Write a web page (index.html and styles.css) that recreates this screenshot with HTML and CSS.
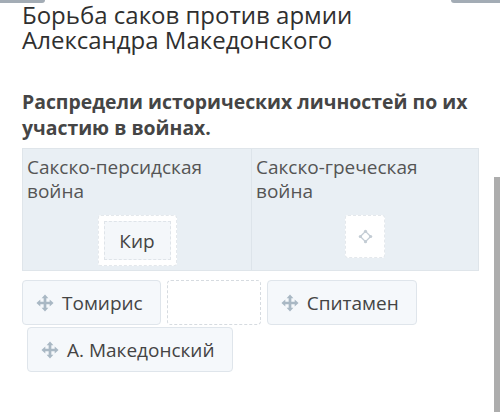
FILE: index.html
```html
<!DOCTYPE html>
<html lang="ru">
  <head>
    <meta charset="UTF-8" />
    <meta name="viewport" content="width=device-width, initial-scale=1.0" />
    <title>Борьба саков</title>
    <link rel="stylesheet" href="styles.css">
  </head>
  <body>
    <div class="edges">
      <span class="edge edge-left"></span>
      <span class="edge edge-right"></span>
    </div>
    <main>
      <h1>Борьба саков против армии Александра Македонского</h1>
      <p class="task">Распредели исторических личностей по их участию в войнах.</p>
      <div class="board">
        <div class="column">
          <div class="caption">Сакско-персидская война</div>
          <div class="slot">
            <div class="placed">Кир</div>
          </div>
        </div>
        <div class="column">
          <div class="caption">Сакско-греческая война</div>
          <div class="slot slot-empty">
            <svg class="slot-icon" viewBox="0 0 16 16" width="15" height="15">
              <path d="M8 2.5 L13.5 8 L8 13.5 L2.5 8 Z" fill="none" stroke="#c3ccd4" stroke-width="1.4" />
              <circle cx="8" cy="2.5" r="1.7" fill="#c3ccd4" />
              <circle cx="13.5" cy="8" r="1.7" fill="#c3ccd4" />
              <circle cx="8" cy="13.5" r="1.7" fill="#c3ccd4" />
              <circle cx="2.5" cy="8" r="1.7" fill="#c3ccd4" />
            </svg>
          </div>
        </div>
      </div>
      <div class="pool">
        <div class="chip">
          <svg class="move" viewBox="0 0 20 20" width="18" height="18">
            <path d="M10 0.5 L13.8 4.8 H11.5 V8.5 H15.2 V6.2 L19.5 10 L15.2 13.8 V11.5 H11.5 V15.2 H13.8 L10 19.5 L6.2 15.2 H8.5 V11.5 H4.8 V13.8 L0.5 10 L4.8 6.2 V8.5 H8.5 V4.8 H6.2 Z" fill="#a9b8c4" />
          </svg>
          Томирис
        </div>
        <div class="gap-slot"></div>
        <div class="chip">
          <svg class="move" viewBox="0 0 20 20" width="18" height="18">
            <path d="M10 0.5 L13.8 4.8 H11.5 V8.5 H15.2 V6.2 L19.5 10 L15.2 13.8 V11.5 H11.5 V15.2 H13.8 L10 19.5 L6.2 15.2 H8.5 V11.5 H4.8 V13.8 L0.5 10 L4.8 6.2 V8.5 H8.5 V4.8 H6.2 Z" fill="#a9b8c4" />
          </svg>
          Спитамен
        </div>
        <div class="chip chip-shifted">
          <svg class="move" viewBox="0 0 20 20" width="18" height="18">
            <path d="M10 0.5 L13.8 4.8 H11.5 V8.5 H15.2 V6.2 L19.5 10 L15.2 13.8 V11.5 H11.5 V15.2 H13.8 L10 19.5 L6.2 15.2 H8.5 V11.5 H4.8 V13.8 L0.5 10 L4.8 6.2 V8.5 H8.5 V4.8 H6.2 Z" fill="#a9b8c4" />
          </svg>
          А. Македонский
        </div>
      </div>
    </main>
    <div class="scrollbar"></div>
  </body>
</html>
```

FILE: styles.css
```css
body {
  margin: 0;
  background: #fff;
  font-family: "Open Sans", "Noto Sans", sans-serif;
  color: #333;
  position: relative;
  height: 412px;
  overflow: hidden;
}

.edges {
  display: flex;
  justify-content: space-between;
  height: 3px;
}

.edge {
  display: block;
  height: 3px;
  background: #a3acb5;
}

.edge-left {
  width: 45px;
  border-radius: 0 0 3px 0;
}

.edge-right {
  width: 49px;
  border-radius: 0 0 0 3px;
}

main {
  width: 457px;
  padding: 0 0 0 22px;
}

h1 {
  margin: -1px 0 0;
  font-size: 24px;
  font-weight: 400;
  line-height: 25px;
  color: #2f2f2f;
}

.task {
  margin: 37px 0 0;
  font-size: 19.4px;
  font-weight: 700;
  line-height: 26px;
  color: #454545;
}

.board {
  margin-top: 7px;
  display: grid;
  grid-template-columns: 228px 1fr;
  background: #e9eff4;
  border: 1px solid #dfe5ea;
  height: 121px;
}

.column {
  display: flex;
  flex-direction: column;
  align-items: center;
}

.column + .column {
  border-left: 1px solid #dde4ea;
}

.caption {
  align-self: stretch;
  padding: 6px 30px 0 4px;
  font-size: 19px;
  line-height: 24px;
  color: #555;
}

.slot {
  margin-top: 12px;
  padding: 5px;
  background: #fff;
  border: 1px dashed #e4e8ec;
  border-radius: 3px;
}

.placed {
  width: 65px;
  height: 37px;
  display: flex;
  align-items: center;
  justify-content: center;
  background: #f4f7fa;
  border: 1px dashed #dfe4e9;
  font-size: 19px;
  color: #444;
}

.slot-empty {
  width: 28px;
  height: 31px;
  display: flex;
  align-items: center;
  justify-content: center;
}

.pool {
  margin-top: 9px;
  display: flex;
  flex-wrap: wrap;
  gap: 2px 6px;
}

.chip {
  height: 43px;
  padding: 0 17px 0 13px;
  display: flex;
  align-items: center;
  gap: 8px;
  background: #f5f8fb;
  border: 1px solid #dfe5eb;
  border-radius: 4px;
  font-size: 19px;
  color: #444;
}

.chip-shifted {
  margin-left: 5px;
}

.gap-slot {
  width: 92px;
  height: 43px;
  border: 1px dashed #d6dbe0;
  border-radius: 4px;
  background: #fff;
}

.scrollbar {
  position: absolute;
  top: 177px;
  right: 0;
  width: 6px;
  height: 235px;
  background: #adadad;
}
```
